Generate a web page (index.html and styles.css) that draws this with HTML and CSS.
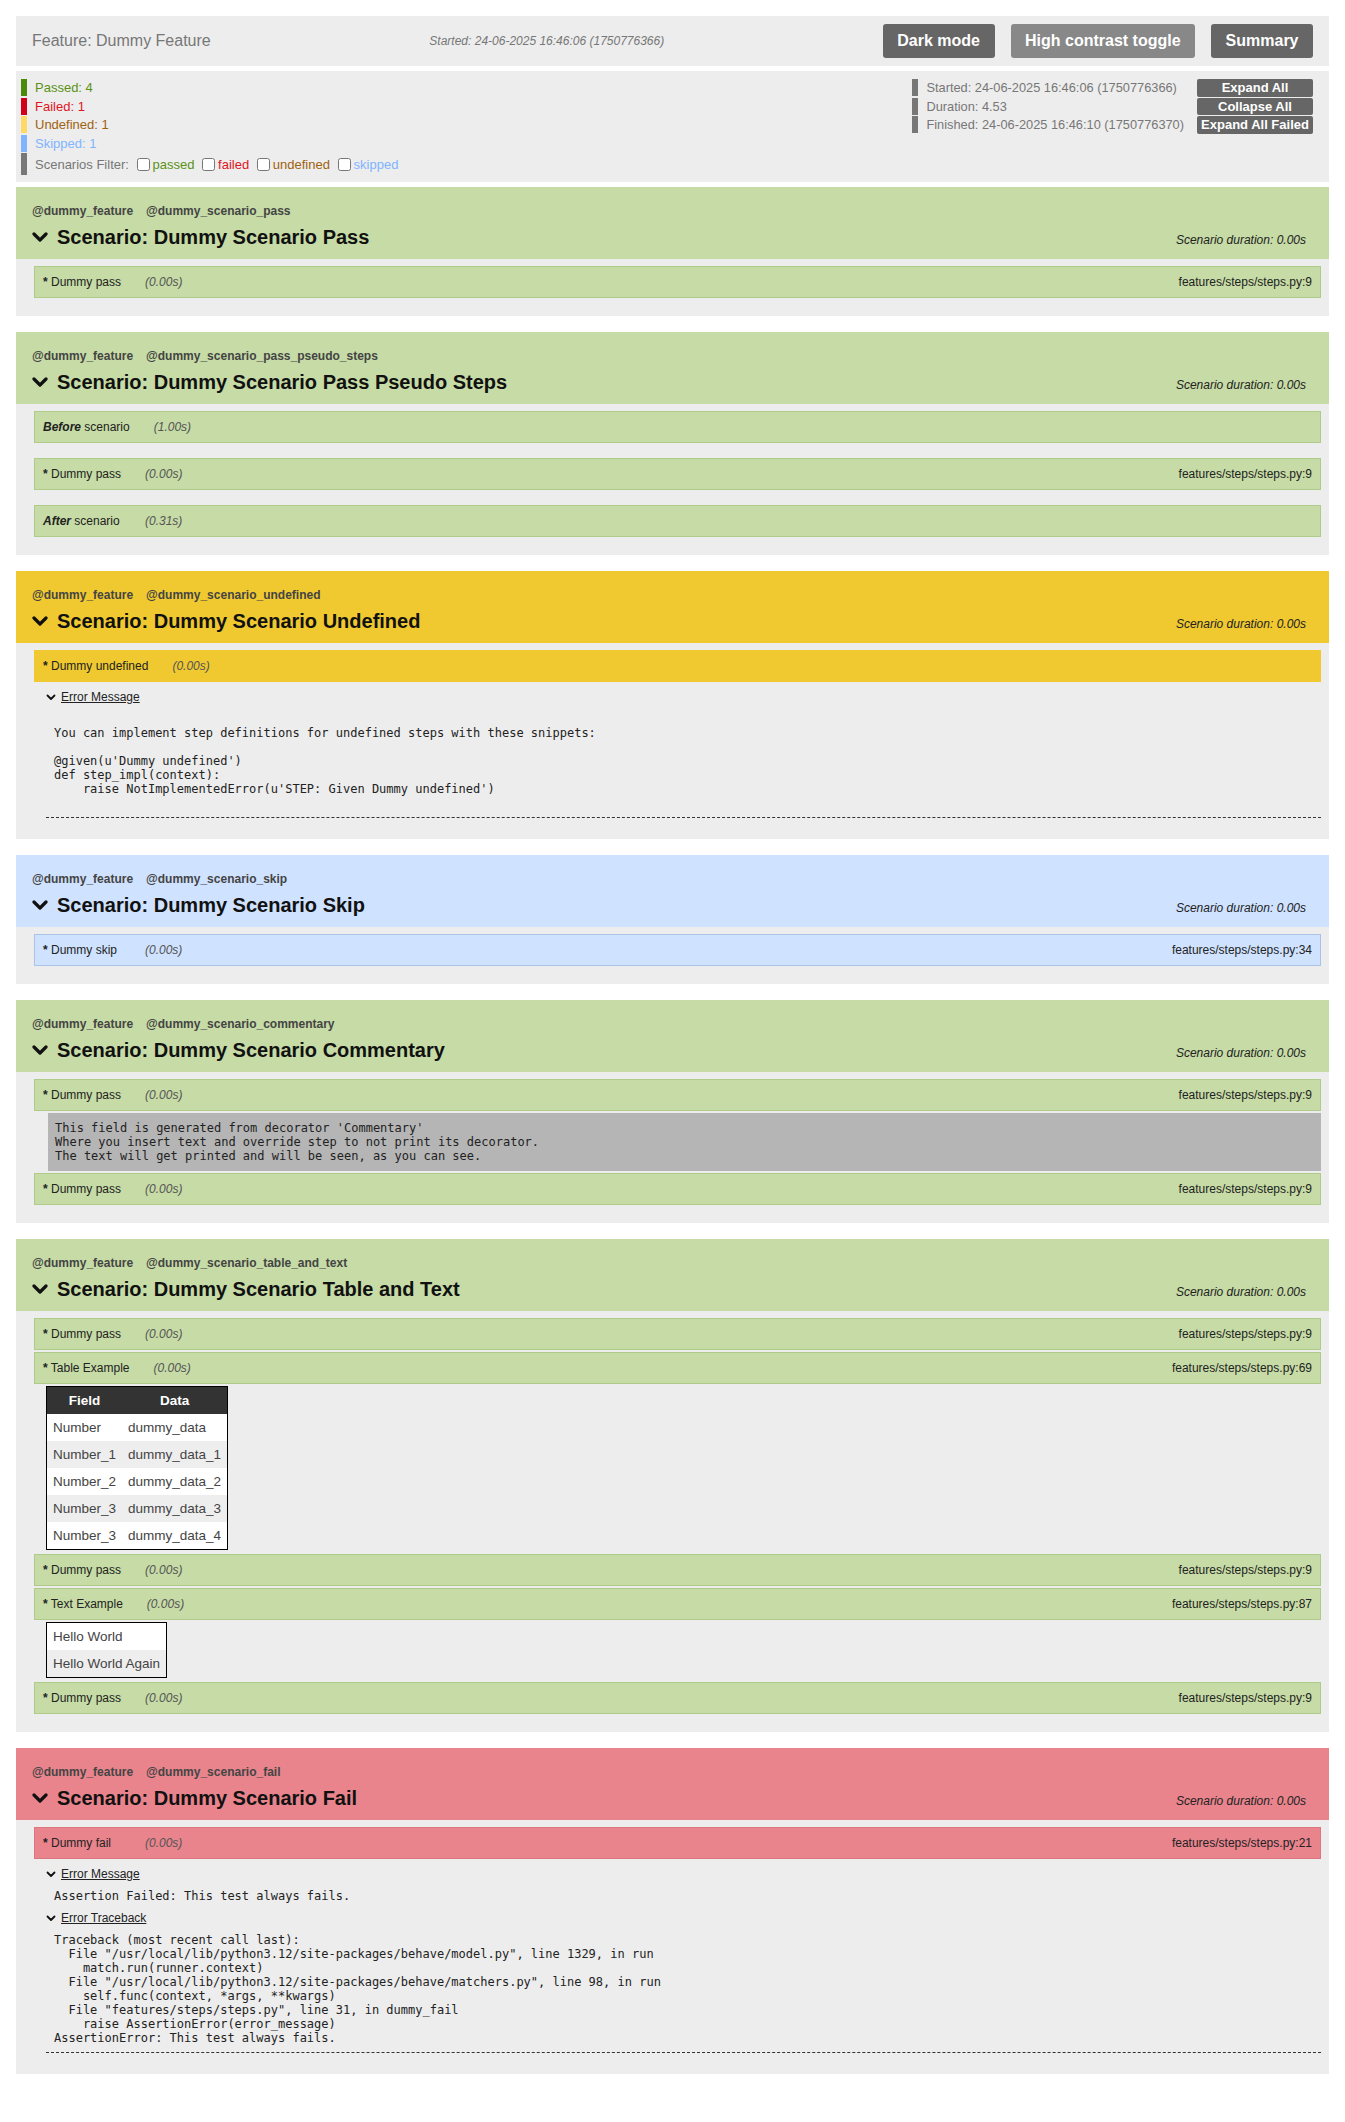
FILE: index.html
```html
<!DOCTYPE html>
<html>
<head>
<meta charset="utf-8">
<title>Behave report</title>
<link rel="stylesheet" href="styles.css">
</head>
<body>
<div class="page">
  <div class="feature-head">
    <div class="feature-title">Feature: Dummy Feature</div>
    <div class="feature-started">Started: 24-06-2025 16:46:06 (1750776366)</div>
    <div class="head-buttons">
      <button class="hbtn">Dark mode</button>
      <button class="hbtn light">High contrast toggle</button>
      <button class="hbtn">Summary</button>
    </div>
  </div>

  <div class="summary">
    <div class="legend">
      <div class="lg passed">Passed: 4</div>
      <div class="lg failed">Failed: 1</div>
      <div class="lg undefined">Undefined: 1</div>
      <div class="lg skipped">Skipped: 1</div>
      <div class="lg filter">Scenarios Filter: <label class="passed-t"><input type="checkbox">passed</label> <label class="failed-t"><input type="checkbox">failed</label> <label class="undefined-t"><input type="checkbox">undefined</label> <label class="skipped-t"><input type="checkbox">skipped</label></div>
    </div>
    <div class="summary-right">
      <div class="info">
        <div class="lg filter">Started: 24-06-2025 16:46:06 (1750776366)</div>
        <div class="lg filter">Duration: 4.53</div>
        <div class="lg filter">Finished: 24-06-2025 16:46:10 (1750776370)</div>
      </div>
      <div class="sbtns">
        <button class="sbtn">Expand All</button>
        <button class="sbtn">Collapse All</button>
        <button class="sbtn">Expand All Failed</button>
      </div>
    </div>
  </div>

  <!-- Scenario 1 -->
  <div class="scenario">
    <div class="scen-head passed-bg">
      <div class="tags"><span>@dummy_feature</span><span>@dummy_scenario_pass</span></div>
      <div class="title-row">
        <h2 class="scen-title"><svg class="chev" viewBox="0 0 16 11" width="16" height="11"><polyline points="2,2 8,8 14,2" fill="none" stroke="#111" stroke-width="3.2" stroke-linecap="round" stroke-linejoin="round"/></svg>Scenario: Dummy Scenario Pass</h2>
        <span class="dur">Scenario duration: 0.00s</span>
      </div>
    </div>
    <div class="scen-body">
      <div class="step passed-step"><span class="name"><b>*</b> Dummy pass</span><span class="time">(0.00s)</span><span class="loc">features/steps/steps.py:9</span></div>
    </div>
  </div>

  <!-- Scenario 2 -->
  <div class="scenario">
    <div class="scen-head passed-bg">
      <div class="tags"><span>@dummy_feature</span><span>@dummy_scenario_pass_pseudo_steps</span></div>
      <div class="title-row">
        <h2 class="scen-title"><svg class="chev" viewBox="0 0 16 11" width="16" height="11"><polyline points="2,2 8,8 14,2" fill="none" stroke="#111" stroke-width="3.2" stroke-linecap="round" stroke-linejoin="round"/></svg>Scenario: Dummy Scenario Pass Pseudo Steps</h2>
        <span class="dur">Scenario duration: 0.00s</span>
      </div>
    </div>
    <div class="scen-body">
      <div class="step passed-step spaced"><span class="name"><b><i>Before</i></b> scenario</span><span class="time">(1.00s)</span></div>
      <div class="step passed-step spaced"><span class="name"><b>*</b> Dummy pass</span><span class="time">(0.00s)</span><span class="loc">features/steps/steps.py:9</span></div>
      <div class="step passed-step"><span class="name"><b><i>After</i></b> scenario</span><span class="time">(0.31s)</span></div>
    </div>
  </div>

  <!-- Scenario 3 -->
  <div class="scenario">
    <div class="scen-head undefined-bg">
      <div class="tags"><span>@dummy_feature</span><span>@dummy_scenario_undefined</span></div>
      <div class="title-row">
        <h2 class="scen-title"><svg class="chev" viewBox="0 0 16 11" width="16" height="11"><polyline points="2,2 8,8 14,2" fill="none" stroke="#111" stroke-width="3.2" stroke-linecap="round" stroke-linejoin="round"/></svg>Scenario: Dummy Scenario Undefined</h2>
        <span class="dur">Scenario duration: 0.00s</span>
      </div>
    </div>
    <div class="scen-body">
      <div class="step undefined-step"><span class="name"><b>*</b> Dummy undefined</span><span class="time">(0.00s)</span></div>
      <div class="error">
        <div class="toggle"><svg class="tchev" viewBox="0 0 10 7" width="10" height="7"><polyline points="1.5,1.5 5,5 8.5,1.5" fill="none" stroke="#111" stroke-width="1.8" stroke-linecap="round" stroke-linejoin="round"/></svg><span>Error Message</span></div>
        <pre class="mono">

You can implement step definitions for undefined steps with these snippets:

@given(u'Dummy undefined')
def step_impl(context):
    raise NotImplementedError(u'STEP: Given Dummy undefined')

</pre>
        <hr class="dash">
      </div>
    </div>
  </div>

  <!-- Scenario 4 -->
  <div class="scenario">
    <div class="scen-head skipped-bg">
      <div class="tags"><span>@dummy_feature</span><span>@dummy_scenario_skip</span></div>
      <div class="title-row">
        <h2 class="scen-title"><svg class="chev" viewBox="0 0 16 11" width="16" height="11"><polyline points="2,2 8,8 14,2" fill="none" stroke="#111" stroke-width="3.2" stroke-linecap="round" stroke-linejoin="round"/></svg>Scenario: Dummy Scenario Skip</h2>
        <span class="dur">Scenario duration: 0.00s</span>
      </div>
    </div>
    <div class="scen-body">
      <div class="step skipped-step"><span class="name"><b>*</b> Dummy skip</span><span class="time">(0.00s)</span><span class="loc">features/steps/steps.py:34</span></div>
    </div>
  </div>

  <!-- Scenario 5 -->
  <div class="scenario">
    <div class="scen-head passed-bg">
      <div class="tags"><span>@dummy_feature</span><span>@dummy_scenario_commentary</span></div>
      <div class="title-row">
        <h2 class="scen-title"><svg class="chev" viewBox="0 0 16 11" width="16" height="11"><polyline points="2,2 8,8 14,2" fill="none" stroke="#111" stroke-width="3.2" stroke-linecap="round" stroke-linejoin="round"/></svg>Scenario: Dummy Scenario Commentary</h2>
        <span class="dur">Scenario duration: 0.00s</span>
      </div>
    </div>
    <div class="scen-body">
      <div class="step passed-step"><span class="name"><b>*</b> Dummy pass</span><span class="time">(0.00s)</span><span class="loc">features/steps/steps.py:9</span></div>
      <pre class="commentary">This field is generated from decorator 'Commentary'
Where you insert text and override step to not print its decorator.
The text will get printed and will be seen, as you can see.</pre>
      <div class="step passed-step"><span class="name"><b>*</b> Dummy pass</span><span class="time">(0.00s)</span><span class="loc">features/steps/steps.py:9</span></div>
    </div>
  </div>

  <!-- Scenario 6 -->
  <div class="scenario">
    <div class="scen-head passed-bg">
      <div class="tags"><span>@dummy_feature</span><span>@dummy_scenario_table_and_text</span></div>
      <div class="title-row">
        <h2 class="scen-title"><svg class="chev" viewBox="0 0 16 11" width="16" height="11"><polyline points="2,2 8,8 14,2" fill="none" stroke="#111" stroke-width="3.2" stroke-linecap="round" stroke-linejoin="round"/></svg>Scenario: Dummy Scenario Table and Text</h2>
        <span class="dur">Scenario duration: 0.00s</span>
      </div>
    </div>
    <div class="scen-body">
      <div class="step passed-step"><span class="name"><b>*</b> Dummy pass</span><span class="time">(0.00s)</span><span class="loc">features/steps/steps.py:9</span></div>
      <div class="step passed-step"><span class="name"><b>*</b> Table Example</span><span class="time">(0.00s)</span><span class="loc">features/steps/steps.py:69</span></div>
      <table class="data">
        <thead><tr><th>Field</th><th>Data</th></tr></thead>
        <tbody>
          <tr><td>Number</td><td>dummy_data</td></tr>
          <tr><td>Number_1</td><td>dummy_data_1</td></tr>
          <tr><td>Number_2</td><td>dummy_data_2</td></tr>
          <tr><td>Number_3</td><td>dummy_data_3</td></tr>
          <tr><td>Number_3</td><td>dummy_data_4</td></tr>
        </tbody>
      </table>
      <div class="step passed-step"><span class="name"><b>*</b> Dummy pass</span><span class="time">(0.00s)</span><span class="loc">features/steps/steps.py:9</span></div>
      <div class="step passed-step"><span class="name"><b>*</b> Text Example</span><span class="time">(0.00s)</span><span class="loc">features/steps/steps.py:87</span></div>
      <div class="textbox">
        <div class="trow">Hello World</div>
        <div class="trow alt">Hello World Again</div>
      </div>
      <div class="step passed-step"><span class="name"><b>*</b> Dummy pass</span><span class="time">(0.00s)</span><span class="loc">features/steps/steps.py:9</span></div>
    </div>
  </div>

  <!-- Scenario 7 -->
  <div class="scenario">
    <div class="scen-head failed-bg">
      <div class="tags"><span>@dummy_feature</span><span>@dummy_scenario_fail</span></div>
      <div class="title-row">
        <h2 class="scen-title"><svg class="chev" viewBox="0 0 16 11" width="16" height="11"><polyline points="2,2 8,8 14,2" fill="none" stroke="#111" stroke-width="3.2" stroke-linecap="round" stroke-linejoin="round"/></svg>Scenario: Dummy Scenario Fail</h2>
        <span class="dur">Scenario duration: 0.00s</span>
      </div>
    </div>
    <div class="scen-body">
      <div class="step failed-step"><span class="name"><b>*</b> Dummy fail</span><span class="time">(0.00s)</span><span class="loc">features/steps/steps.py:21</span></div>
      <div class="error">
        <div class="toggle"><svg class="tchev" viewBox="0 0 10 7" width="10" height="7"><polyline points="1.5,1.5 5,5 8.5,1.5" fill="none" stroke="#111" stroke-width="1.8" stroke-linecap="round" stroke-linejoin="round"/></svg><span>Error Message</span></div>
        <pre class="mono">Assertion Failed: This test always fails.</pre>
        <div class="toggle"><svg class="tchev" viewBox="0 0 10 7" width="10" height="7"><polyline points="1.5,1.5 5,5 8.5,1.5" fill="none" stroke="#111" stroke-width="1.8" stroke-linecap="round" stroke-linejoin="round"/></svg><span>Error Traceback</span></div>
        <pre class="mono">Traceback (most recent call last):
  File "/usr/local/lib/python3.12/site-packages/behave/model.py", line 1329, in run
    match.run(runner.context)
  File "/usr/local/lib/python3.12/site-packages/behave/matchers.py", line 98, in run
    self.func(context, *args, **kwargs)
  File "features/steps/steps.py", line 31, in dummy_fail
    raise AssertionError(error_message)
AssertionError: This test always fails.</pre>
        <hr class="dash">
      </div>
    </div>
  </div>
</div>
</body>
</html>
```

FILE: styles.css
```css
html, body {
  margin: 0;
  padding: 0;
  background: #ffffff;
}
body {
  font-family: "Liberation Sans", Arial, sans-serif;
  color: #222;
}
.page {
  padding: 16px;
}

/* feature header */
.feature-head {
  display: flex;
  align-items: center;
  justify-content: space-between;
  background: #ededed;
  height: 50px;
  box-sizing: border-box;
  padding: 0 16px;
}
.feature-title {
  font-size: 16px;
  color: #777;
}
.feature-started {
  font-size: 12px;
  font-style: italic;
  color: #777;
}
.head-buttons {
  display: flex;
  gap: 16px;
}
.hbtn {
  font-family: "Liberation Sans", Arial, sans-serif;
  font-weight: bold;
  font-size: 16px;
  line-height: 18px;
  color: #fff;
  background: #666;
  border: none;
  border-radius: 3px;
  padding: 8px 14.5px;
}
.hbtn.light {
  background: #888;
}

/* summary panel */
.summary {
  margin-top: 5px;
  background: #ededed;
  display: flex;
  justify-content: space-between;
  align-items: flex-start;
  padding: 8px 16px 7px 5px;
  height: 111px;
  box-sizing: border-box;
}
.lg {
  border-left: 6px solid #777;
  padding-left: 8px;
  font-size: 13px;
  height: 17px;
  line-height: 17px;
  margin-bottom: 1.6px;
  white-space: nowrap;
}
.lg.passed { border-color: #4c8a0c; color: #5a9216; }
.lg.failed { border-color: #d0021b; color: #e0141e; }
.lg.undefined { border-color: #ffd966; color: #a0620e; }
.lg.skipped { border-color: #80b4ff; color: #80b4ff; }
.lg.filter { border-color: #777; color: #777; }
.legend .lg.filter {
  height: 21px;
  line-height: 21px;
  margin-top: 1px;
  padding-top: 1px;
}
.legend input {
  margin: 3px 3px 3px 4px;
  width: 13px;
  height: 13px;
  vertical-align: -2px;
}
.passed-t { color: #5a9216; }
.failed-t { color: #e0141e; }
.undefined-t { color: #a0620e; }
.skipped-t { color: #80b4ff; }

.summary-right {
  display: flex;
  gap: 13px;
}
.info .lg {
  font-size: 12.8px;
}
.sbtns {
  display: flex;
  flex-direction: column;
  width: 116px;
}
.sbtn {
  font-family: "Liberation Sans", Arial, sans-serif;
  font-weight: bold;
  font-size: 13px;
  height: 17.5px;
  line-height: 17px;
  padding: 0 4px;
  margin-bottom: 1px;
  color: #fff;
  background: #666;
  border: none;
  border-radius: 2px;
}

/* scenarios */
.scenario {
  margin-top: 5px;
}
.scenario + .scenario {
  margin-top: 16px;
}
.scen-head {
  height: 72px;
  box-sizing: border-box;
  padding: 16px 23px 0 16px;
}
.passed-bg { background: #c6dba5; }
.undefined-bg { background: #f0c930; }
.skipped-bg { background: #cfe2ff; }
.failed-bg { background: #e9848d; }

.tags {
  display: flex;
  gap: 13px;
  font-size: 12px;
  font-weight: bold;
  line-height: 16px;
  color: #444;
}
.title-row {
  display: flex;
  justify-content: space-between;
  align-items: center;
  margin-top: 4px;
}
.scen-title {
  margin: 0;
  font-size: 20px;
  line-height: 28px;
  font-weight: bold;
  color: #111;
  display: flex;
  align-items: center;
}
.chev {
  margin-right: 9px;
  margin-top: 1px;
}
.dur {
  font-size: 12px;
  font-style: italic;
  color: #222;
  padding-top: 5px;
}

.scen-body {
  background: #ededed;
  padding: 7px 0 16px 0;
}
.step {
  display: flex;
  align-items: center;
  height: 32px;
  box-sizing: border-box;
  margin: 0 8px 2px 18px;
  padding: 0 8px;
  font-size: 12px;
  color: #222;
  border: 1px solid #a9c98a;
}
.step.spaced {
  margin-bottom: 15px;
}
.passed-step { background: #c6dba5; border-color: #aecb8a; }
.undefined-step { background: #f0c930; border-color: #f0c930; }
.skipped-step { background: #cfe2ff; border-color: #aac3e6; }
.failed-step { background: #e9848d; border-color: #dc7680; }
.step .name {
  min-width: 78px;
}
.step .time {
  margin-left: 24px;
  font-style: italic;
  color: #555;
}
.step .loc {
  margin-left: auto;
}

/* error blocks */
.error {
  margin: 0 8px 0 30px;
}
.toggle {
  display: flex;
  align-items: center;
  height: 16px;
  margin-top: 7px;
  font-size: 12px;
  color: #222;
}
.toggle span {
  text-decoration: underline;
}
.tchev {
  margin-left: 0;
  margin-right: 5px;
}
.mono {
  font-family: "DejaVu Sans Mono", monospace;
  font-size: 12px;
  line-height: 14px;
  margin: 7px 0;
  padding-left: 8px;
  color: #222;
}
.dash {
  border: none;
  border-top: 1px dashed #333;
  margin: 0 0 5px 0;
  height: 0;
}

/* commentary */
.commentary {
  margin: 0 8px 2px 32px;
  background: #b5b5b5;
  font-family: "DejaVu Sans Mono", monospace;
  font-size: 12px;
  line-height: 14px;
  padding: 8px 7px 8px 7px;
  color: #222;
  height: 58px;
  box-sizing: border-box;
}

/* data table */
.data {
  margin: 0 0 4px 30px;
  border-collapse: collapse;
  border: 1px solid #000;
  font-size: 13.5px;
  color: #444;
}
.data th {
  background: #333;
  color: #fff;
  font-weight: bold;
  height: 27px;
  padding: 0 6px;
  text-align: center;
}
.data td {
  height: 27px;
  padding: 0 6px;
  background: #fff;
}
.data tbody tr:nth-child(even) td {
  background: #eeeeee;
}

.textbox {
  display: block;
  width: max-content;
  margin: 0 0 4px 30px;
  border: 1px solid #000;
  font-size: 13.5px;
  color: #444;
}
.trow {
  height: 27px;
  line-height: 27px;
  padding: 0 6px;
  background: #fff;
}
.trow.alt {
  background: #eeeeee;
}
```
